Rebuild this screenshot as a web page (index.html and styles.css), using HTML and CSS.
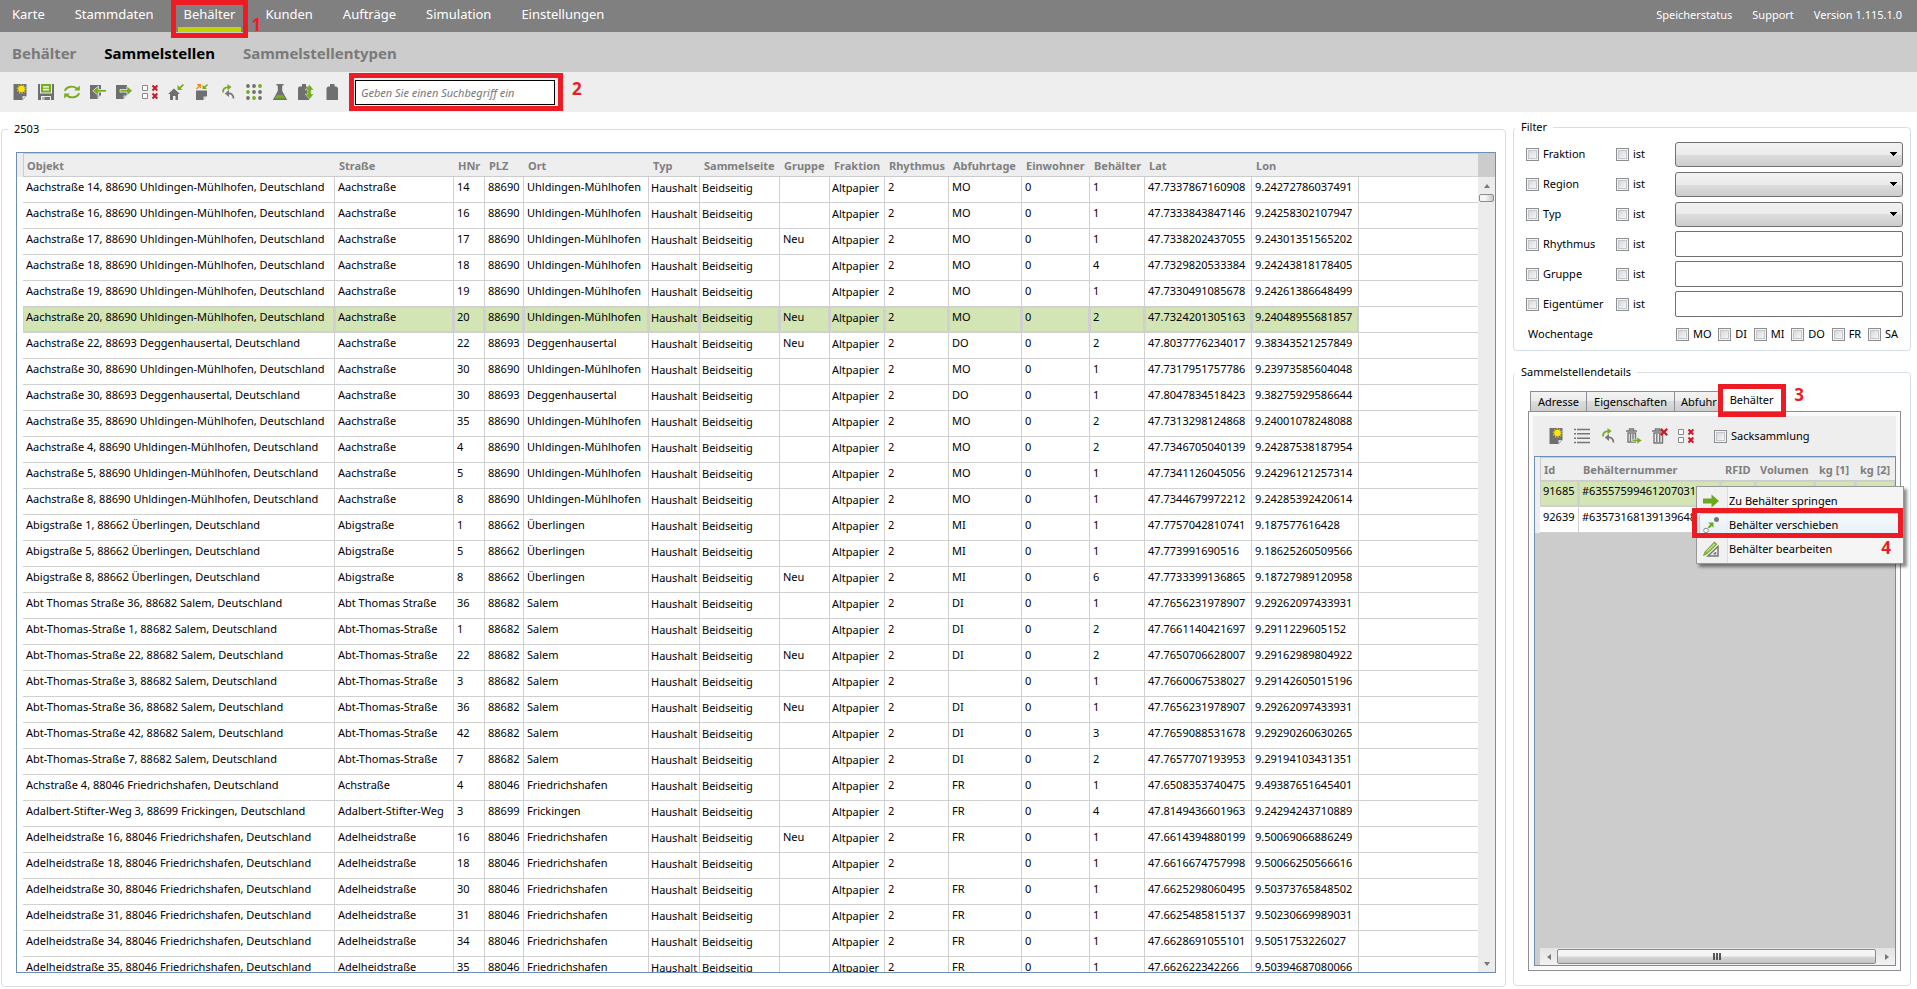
FILE: index.html
```html
<!DOCTYPE html>
<html lang="de">
<head>
<meta charset="utf-8">
<title>Sammelstellen</title>
<link rel="stylesheet" href="styles.css">
</head>
<body>
<svg class="sprite" aria-hidden="true">
  <symbol id="i-new" viewBox="0 0 16 16"><path fill="#6f6f6f" d="M1.500 0h13v12l-4 4h-9z"/><path fill="#e2e2e2" d="M10.500 15.500V12H14z"/><circle cx="9.500" cy="5" r="4.200" fill="none" stroke="#c9bd2a" stroke-width="1.400" stroke-dasharray="1.300 1.300"/><circle cx="9.500" cy="5" r="3.300" fill="#ffe600"/></symbol>
  <symbol id="i-save" viewBox="0 0 16 16"><path fill="#6f6f6f" d="M0 0h2v9.500h12V0h2v16h-3v-4H3v4H0z"/><path fill="#76ad1c" d="M3 0h10v8.500H3z"/><path fill="#e4eed2" d="M5 2h6v4.500H5z"/><path stroke="#76ad1c" d="M5 4.200h6"/><path fill="#b8b8b8" d="M4 13h2.500v3H4z"/><path fill="#777" d="M6.500 13H12v3H6.500z"/></symbol>
  <symbol id="i-refresh" viewBox="0 0 16 16"><g fill="none" stroke="#76ad1c" stroke-width="1.900"><path d="M.8 6.800A7.200 6 0 0 1 13.400 5"/><path d="M15.200 9.200A7.200 6 0 0 1 2.600 11"/></g><path fill="#76ad1c" d="M10.200 6.500h5.600V1.500zM5.800 9.500H.2v5z"/></symbol>
  <symbol id="i-in" viewBox="0 0 16 16"><path fill="#6f6f6f" d="M0 1h11v10l-3.500 4H0z"/><path fill="#d0d0d0" d="M7.500 15v-3.500H11z"/><path fill="#76ad1c" stroke="#eee" stroke-width=".8" d="M2.800 6.800 8.500 2v3.500h8v2.600h-8v3.500z"/></symbol>
  <symbol id="i-out" viewBox="0 0 16 16"><path fill="#6f6f6f" d="M0 1h11v10l-3.500 4H0z"/><path fill="#d0d0d0" d="M7.500 15v-3.500H11z"/><path fill="#76ad1c" stroke="#eee" stroke-width=".8" d="M16.500 6.800 11 2v3.500H4v2.600h7v3.500z"/></symbol>
  <symbol id="i-check" viewBox="0 0 16 16"><path fill="#fafafa" stroke="#8a8a8a" d="M.5 1.500h5v5h-5zM.5 9.500h5v5h-5z"/><path stroke="#cf1820" stroke-width="2" d="m10.500 1.500 4.800 5m0-5-4.800 5M10.500 9.500l4.800 5m0-5-4.800 5"/></symbol>
  <symbol id="i-home" viewBox="0 0 16 16"><path fill="#6f6f6f" d="M6 4.500 0 10h2v6h3v-4h2.500v4H10v-6h2z"/><path fill="#76ad1c" d="M9.500 1v5h5l-1.700-1.700L16 1.200 14.800 0l-3.200 3z"/></symbol>
  <symbol id="i-page" viewBox="0 0 16 16"><path fill="#6f6f6f" d="M2 6.500h11V12l-3.500 4H2z"/><path fill="#ddd" d="M9.500 16v-3.500H13z"/><path fill="#ef8a1d" d="M7 0v4.500L5.500 3 3 5.500 2 4.500 4.500 2 2.500 0z"/><path fill="#76ad1c" d="M8.500.5V5H13l-1.500-1.500L14 1l-1-1-2.800 2.500z"/></symbol>
  <symbol id="i-undo" viewBox="0 0 16 16"><g fill="none" stroke-width="1.800"><path stroke="#76ad1c" d="M3.200 8.500C2.500 5 5 3.200 8.500 3.200"/><path stroke="#777" d="M8 9.500c3.500-.3 5.500 1.500 5.500 5"/></g><path fill="#76ad1c" d="M7.500 0v6.500L11.500 3z"/><path fill="#777" d="M9 6v7L4.800 9.600z"/></symbol>
  <symbol id="i-dots" viewBox="0 0 16 16"><g fill="#6f6f6f"><circle cx="2" cy="2" r="1.900"/><circle cx="8" cy="2" r="1.900"/><circle cx="8" cy="8" r="1.900"/><circle cx="14" cy="8" r="1.900"/><circle cx="2" cy="14" r="1.900"/><circle cx="14" cy="14" r="1.900"/></g><g fill="#76ad1c"><circle cx="14" cy="2" r="1.900"/><circle cx="2" cy="8" r="1.900"/><circle cx="8" cy="14" r="1.900"/></g></symbol>
  <symbol id="i-flask" viewBox="0 0 16 16"><path fill="#6f6f6f" d="M4.500 0h7v1.500h-1.300V7l5 9H.8l5-9V1.500H4.500z"/><path fill="#76ad1c" d="M4.800 11h6.400l2 3.500H2.800z"/></symbol>
  <symbol id="i-sync" viewBox="0 0 16 16"><path fill="#6f6f6f" d="M4 0h4v2.500h3V16H0V4l1-1.500h3z"/><path fill="#76ad1c" stroke="#eee" stroke-width=".5" d="M11.500.5 15.800 6h-2.600v4h2.600l-4.300 5.500L7.200 10h2.600V6H7.200z"/></symbol>
  <symbol id="i-bin" viewBox="0 0 16 16"><path fill="#6f6f6f" d="M6 0h4.500v2.500h2L14 4v12H2.500V4L4 2.500h2z"/></symbol>
  <symbol id="i-list" viewBox="0 0 16 16"><path stroke="#777" stroke-width="1.400" d="M0 1.500h2M3 1.500h13M0 5.800h2M3 5.800h13M0 10.200h2M3 10.200h13M0 14.500h2M3 14.500h13"/></symbol>
  <symbol id="i-trashgo" viewBox="0 0 16 16"><path fill="none" stroke="#777" stroke-width="1.400" d="M0 3h11M3.500 2.500V1h4v1.500M2 5h7.500v9H2zM4.500 6v7M7 6v7"/><path fill="#76ad1c" stroke="#eee" stroke-width=".5" d="M6.500 11.300H11V9l5 3.500-5 3.500v-2.500H6.500z"/></symbol>
  <symbol id="i-trashx" viewBox="0 0 16 16"><path fill="none" stroke="#777" stroke-width="1.400" d="M0 3h11M3.500 2.500V1h4v1.500M2 5h8.500v10H2zM4.800 6v8M7.700 6v8"/><path stroke="#cf1820" stroke-width="2.200" d="m8.800.8 6.400 6.400m0-6.400L8.800 7.200"/></symbol>
  <symbol id="i-arrow" viewBox="0 0 16 16"><path fill="#6aa81c" d="M0 5.500h8.500V1.500L16 8l-7.500 6.500v-4H0z"/></symbol>
  <symbol id="i-move" viewBox="0 0 16 16"><circle cx="13.500" cy="2.500" r="2.500" fill="#777"/><circle cx="3" cy="13.500" r="2.300" fill="#fff" stroke="#888"/><path fill="#6aa81c" d="M10.500 5.500v5.300L8.800 9 6 11.500 4.800 10.200 7.200 7.600 5.300 5.500z"/></symbol>
  <symbol id="i-edit" viewBox="0 0 16 16"><path fill="none" stroke="#777" stroke-width="1.500" d="M15 5.500V15H5zM12.500 11v1.700h-2"/><path fill="#8cba43" stroke="#6a9a24" stroke-width=".7" d="m11.500.8 2.500 2.500L4 13l-3.500 1.500L1.800 11z"/><path fill="none" stroke="#fff" stroke-width=".8" d="M11.500 3 4 10.500"/></symbol>
</svg>

<header class="topbar">
  <nav class="mainnav" aria-label="Hauptmenü">
    <a href="#">Karte</a>
    <a href="#">Stammdaten</a>
    <a href="#" class="current">Behälter<span class="mark mark-nav"></span><b class="num num-1">1</b></a>
    <a href="#">Kunden</a>
    <a href="#">Aufträge</a>
    <a href="#">Simulation</a>
    <a href="#">Einstellungen</a>
  </nav>
  <nav class="metanav" aria-label="Service">
    <a href="#">Speicherstatus</a>
    <a href="#">Support</a>
    <span>Version 1.115.1.0</span>
  </nav>
</header>

<nav class="subnav" aria-label="Untermenü">
  <a href="#">Behälter</a>
  <a href="#" class="current">Sammelstellen</a>
  <a href="#">Sammelstellentypen</a>
</nav>

<div class="toolbar">
  <button aria-label="Neu"><svg><use href="#i-new"/></svg></button>
  <button aria-label="Speichern"><svg><use href="#i-save"/></svg></button>
  <button aria-label="Aktualisieren"><svg><use href="#i-refresh"/></svg></button>
  <button aria-label="Importieren"><svg><use href="#i-in"/></svg></button>
  <button aria-label="Exportieren"><svg><use href="#i-out"/></svg></button>
  <button aria-label="Auswahl aufheben"><svg><use href="#i-check"/></svg></button>
  <button aria-label="Standort"><svg><use href="#i-home"/></svg></button>
  <button aria-label="Zuordnen"><svg><use href="#i-page"/></svg></button>
  <button aria-label="Rückgängig"><svg><use href="#i-undo"/></svg></button>
  <button aria-label="Raster"><svg><use href="#i-dots"/></svg></button>
  <button aria-label="Test"><svg><use href="#i-flask"/></svg></button>
  <button aria-label="Abgleich"><svg><use href="#i-sync"/></svg></button>
  <button aria-label="Behälter"><svg><use href="#i-bin"/></svg></button>
  <div class="search">
    <input type="text" aria-label="Suche" placeholder="Geben Sie einen Suchbegriff ein">
    <span class="mark mark-search"></span><b class="num num-2">2</b>
  </div>
</div>

<main class="content">
  <fieldset class="group group-list">
    <legend>2503</legend>
    <div class="grid">
      <div class="grid-view">
        <table class="data places">
          <colgroup>
            <col class="w-mark"><col class="w-objekt"><col class="w-strasse"><col class="w-hnr"><col class="w-plz"><col class="w-ort"><col class="w-typ"><col class="w-seite"><col class="w-gruppe"><col class="w-fraktion"><col class="w-rhythmus"><col class="w-tage"><col class="w-einw"><col class="w-beh"><col class="w-geo"><col class="w-geo"><col>
          </colgroup>
          <thead><tr><td class="mark-col"></td><th>Objekt</th><th>Straße</th><th>HNr</th><th>PLZ</th><th>Ort</th><th>Typ</th><th>Sammelseite</th><th>Gruppe</th><th>Fraktion</th><th>Rhythmus</th><th>Abfuhrtage</th><th>Einwohner</th><th>Behälter</th><th>Lat</th><th>Lon</th><td class="fill"></td></tr></thead>
          <tbody id="places"></tbody>
        </table>
      </div>
      <div class="vscroll">
        <span class="corner"></span>
        <button class="sb-up" aria-label="Nach oben"></button>
        <span class="v-thumb"></span>
        <button class="sb-down" aria-label="Nach unten"></button>
      </div>
    </div>
  </fieldset>

  <aside class="side">
    <fieldset class="group group-filter">
      <legend>Filter</legend>
      <div class="filter-row"><label><input type="checkbox">Fraktion</label><label><input type="checkbox">ist</label><select aria-label="Fraktion Wert"><option></option></select></div>
      <div class="filter-row"><label><input type="checkbox">Region</label><label><input type="checkbox">ist</label><select aria-label="Region Wert"><option></option></select></div>
      <div class="filter-row"><label><input type="checkbox">Typ</label><label><input type="checkbox">ist</label><select aria-label="Typ Wert"><option></option></select></div>
      <div class="filter-row"><label><input type="checkbox">Rhythmus</label><label><input type="checkbox">ist</label><input type="text" aria-label="Rhythmus Wert"></div>
      <div class="filter-row"><label><input type="checkbox">Gruppe</label><label><input type="checkbox">ist</label><input type="text" aria-label="Gruppe Wert"></div>
      <div class="filter-row"><label><input type="checkbox">Eigentümer</label><label><input type="checkbox">ist</label><input type="text" aria-label="Eigentümer Wert"></div>
      <div class="filter-row"><span class="days-title">Wochentage</span>
        <div class="days"><label><input type="checkbox">MO</label><label><input type="checkbox">DI</label><label><input type="checkbox">MI</label><label><input type="checkbox">DO</label><label><input type="checkbox">FR</label><label><input type="checkbox">SA</label></div>
      </div>
    </fieldset>

    <fieldset class="group group-details">
      <legend>Sammelstellendetails</legend>
      <div class="tabs" role="tablist">
        <button role="tab">Adresse</button><button role="tab">Eigenschaften</button><button role="tab" class="clipped">Abfuhr</button><button role="tab" class="active" aria-selected="true">Behälter<span class="mark mark-tab"></span><b class="num num-3">3</b></button>
      </div>
      <div class="pane">
        <div class="toolbar small">
          <button aria-label="Neu"><svg><use href="#i-new"/></svg></button>
          <button aria-label="Liste"><svg><use href="#i-list"/></svg></button>
          <button aria-label="Rückgängig"><svg><use href="#i-undo"/></svg></button>
          <button aria-label="Verschieben"><svg><use href="#i-trashgo"/></svg></button>
          <button aria-label="Löschen"><svg><use href="#i-trashx"/></svg></button>
          <button aria-label="Auswahl aufheben"><svg><use href="#i-check"/></svg></button>
          <label><input type="checkbox">Sacksammlung</label>
        </div>
        <div class="grid bins-grid">
          <div class="bins-view">
            <table class="data bins">
              <colgroup><col class="w-mark"><col class="w-id"><col class="w-nummer"><col class="w-rfid"><col class="w-vol"><col class="w-kg"><col></colgroup>
              <thead><tr><td class="mark-col"></td><th>Id</th><th>Behälternummer</th><th>RFID</th><th>Volumen</th><th>kg [1]</th><th>kg [2]</th></tr></thead>
              <tbody>
                <tr class="selected"><td class="mark-col"></td><td>91685</td><td>#635575994612070312</td><td></td><td></td><td></td><td></td></tr>
                <tr><td class="mark-col"></td><td>92639</td><td>#635731681391396484</td><td></td><td></td><td></td><td></td></tr>
              </tbody>
            </table>
          </div>
          <div class="hscroll">
            <button class="sb-left" aria-label="Nach links"></button>
            <span class="h-thumb"><i></i><i></i><i></i></span>
            <button class="sb-right" aria-label="Nach rechts"></button>
          </div>
          <div class="menu" role="menu">
            <button role="menuitem"><svg><use href="#i-arrow"/></svg><span>Zu Behälter springen</span></button>
            <button role="menuitem" class="hover"><svg><use href="#i-move"/></svg><span>Behälter verschieben</span></button>
            <button role="menuitem"><svg><use href="#i-edit"/></svg><span>Behälter bearbeiten</span></button>
            <span class="mark mark-menu"></span><b class="num num-4">4</b>
          </div>
        </div>
      </div>
    </fieldset>
  </aside>
</main>
<script src="script.js"></script>
</body>
</html>
```
FILE: styles.css
```css
* { box-sizing: border-box; }

body {
  margin: 0;
  height: 100vh;
  display: flex;
  flex-direction: column;
  overflow: hidden;
  background: #fff;
  color: #000;
  font: 11px/16px "Noto Sans", "Open Sans", sans-serif;
}

a { color: inherit; text-decoration: none; }
button { margin: 0; padding: 0; border: 0; background: none; font: inherit; color: inherit; }
.sprite { display: none; }

/* header bars */
.topbar {
  flex: none;
  height: 32px;
  display: flex;
  justify-content: space-between;
  background: #808080;
  color: #fff;
}
.mainnav { display: flex; gap: 18px; padding-left: 6px; font-size: 13px; line-height: 28px; }
.mainnav a { position: relative; padding: 0 6px; }
.mainnav .current { border-bottom: 5px solid #c3d300; }
.metanav { display: flex; gap: 20px; padding-right: 15px; line-height: 30px; }

.subnav {
  flex: none;
  display: flex;
  align-items: center;
  gap: 28px;
  height: 40px;
  padding: 2px 0 0 12px;
  background: #ccc;
  color: #7a7a7a;
  font-size: 15px;
  font-weight: 700;
  line-height: 20px;
}
.subnav .current { color: #000; }

.toolbar {
  flex: none;
  display: flex;
  align-items: center;
  height: 40px;
  padding-left: 7px;
  background: #eee;
}
.toolbar button { width: 26px; height: 24px; display: flex; align-items: center; justify-content: center; }
.toolbar svg { width: 16px; height: 16px; }

.search { position: relative; margin-left: 10px; display: flex; }
.search input {
  width: 200px;
  height: 25px;
  padding: 0 5px;
  border: 1px solid #000;
  background: #fff;
  font: italic 11px/16px "Noto Sans", sans-serif;
}
.search input::placeholder { color: #777; opacity: 1; }

/* red callouts */
.mark { position: absolute; border: 5px solid #ed1c24; pointer-events: none; z-index: 2; }
.num { position: absolute; z-index: 2; color: #ed1c24; font-size: 17px; font-weight: 700; line-height: 20px; }
.mark-nav { top: 0; left: -7px; right: -7px; height: 38px; }
.num-1 { left: 74px; top: 15px; }
.mark-search { inset: -7px -8px -6px -6px; }
.num-2 { left: 217px; top: -1px; }
.mark-tab { inset: -5px -3px -6px -2px; }
.num-3 { right: -21px; top: -4px; }
.mark-menu { left: -5px; right: 0; top: 21px; height: 30px; }
.num-4 { right: 12px; top: 51px; }

/* layout */
.content { flex: 1; min-height: 0; display: flex; gap: 7px; padding: 0 6px 2px 1px; }
.group {
  display: flex;
  flex-direction: column;
  min-width: 0;
  min-height: 0;
  margin: 0;
  border: 1px solid #d5dfe5;
  border-radius: 4px;
}
.group legend { padding: 0 6px; }
.group-list { flex: 1; margin-top: 9px; padding: 15px 9px 13px 14px; }
.group-list legend { margin-left: -8px; }
.side { flex: none; width: 398px; display: flex; flex-direction: column; padding-top: 7px; }
.group-filter { flex: none; padding: 4px 7px 0 12px; height: 232px; }
.group-filter legend { margin-left: -11px; }
.group-details { flex: 1; margin: 13px 0 1px; padding: 9px 9px 14px 14px; }
.group-details legend { margin-left: -13px; }

/* grids */
.grid { position: relative; flex: 1; min-height: 0; display: flex; border: 1px solid #6d8fb3; }
.grid-view { flex: 1; min-width: 0; overflow: hidden; background: #fff; }
.data { width: 100%; table-layout: fixed; border-collapse: separate; border-spacing: 0; }
.data thead tr { height: 24px; background: #eee; }
.data th {
  padding: 2px 0 0 4px;
  border-top: 1px solid #ccc;
  border-bottom: 1px solid #ccc;
  color: #808080;
  font-weight: 700;
  line-height: 16px;
  text-align: left;
  white-space: nowrap;
}
.data th:nth-child(2) { padding-left: 3px; border-left: 1px solid #ccc; }
.data thead .fill { border-top: 1px solid #ccc; }
.data tbody tr { height: 26px; background: #fff; }
.data td {
  padding: 2px 0 0 3px;
  border-right: 1px solid #d0d0d0;
  border-bottom: 1px solid #d0d0d0;
  vertical-align: top;
  white-space: nowrap;
  overflow: hidden;
}
.data td.low { padding-top: 3px; padding-left: 2px; }
.data td.fill { border-right: 0; }
.data td.mark-col, .data thead .mark-col { border: 0; padding: 0; }
.data .selected td:not(.fill):not(.mark-col) { background: #d3e4b5; box-shadow: inset 0 0 0 1px #d0d0d0; }

.w-mark { width: 6px; }
.w-objekt { width: 312px; }
.w-strasse { width: 119px; }
.w-hnr { width: 31px; }
.w-plz { width: 39px; }
.w-ort { width: 125px; }
.w-typ { width: 51px; }
.w-seite { width: 80px; }
.w-gruppe { width: 50px; }
.w-fraktion { width: 55px; }
.w-rhythmus { width: 64px; }
.w-tage { width: 73px; }
.w-einw { width: 68px; }
.w-beh { width: 55px; }
.w-geo { width: 107px; }

.bins .w-mark { width: 5px; }
.w-id { width: 39px; }
.w-nummer { width: 142px; }
.w-rfid { width: 35px; }
.w-vol { width: 59px; }
.w-kg { width: 41px; }

/* scrollbars */
.vscroll { flex: none; width: 17px; display: flex; flex-direction: column; background: #ececec; }
.corner { height: 24px; background: #ccc; }
.v-thumb { height: 8px; margin: 0 1px; border: 1px solid #8c8c8c; border-radius: 2px; background: linear-gradient(90deg, #f5f5f5 40%, #c6c6c6); }
.sb-up, .sb-down { height: 17px; display: flex; align-items: center; justify-content: center; }
.sb-down { margin-top: auto; }
.sb-up::before, .sb-down::before, .sb-left::before, .sb-right::before { content: ""; border: 3px solid transparent; }
.sb-up::before { border-top: 0; border-bottom: 4px solid #777; }
.sb-down::before { border-bottom: 0; border-top: 4px solid #777; }
.sb-left::before { border-left: 0; border-right: 4px solid #777; }
.sb-right::before { border-right: 0; border-left: 4px solid #777; }
.hscroll { flex: none; height: 17px; margin-left: 5px; display: flex; background: linear-gradient(#e3e3e3, #f2f2f2); }
.sb-left, .sb-right { width: 17px; display: flex; align-items: center; justify-content: center; }
.h-thumb {
  flex: 1;
  margin: 1px 2px 1px 0;
  display: flex;
  align-items: center;
  justify-content: center;
  gap: 1px;
  border: 1px solid #8c8c8c;
  border-radius: 2px;
  background: linear-gradient(#f5f5f5 45%, #d6d6d6 55%, #c3c3c3);
}
.h-thumb i { width: 2px; height: 7px; background: #555; }

/* form controls */
input[type="checkbox"] {
  appearance: none;
  flex: none;
  width: 13px;
  height: 13px;
  margin: 0;
  border: 1px solid #8e8f8f;
  background: linear-gradient(135deg, #cbcfd5, #f6f6f6 80%);
  box-shadow: inset 0 0 0 1px #f4f4f4, inset 0 0 0 2px #c4c8cc;
}
label { display: flex; align-items: center; gap: 4px; }
.filter-row { display: grid; grid-template-columns: 90px 59px 1fr; height: 30px; align-items: center; }
.filter-row select, .filter-row input[type="text"] {
  width: 100%;
  height: 26px;
  border: 1px solid #707070;
  border-radius: 2px;
  background: #fff;
  font: inherit;
}
.filter-row select {
  appearance: none;
  height: 25px;
  border-radius: 3px;
  background:
    conic-gradient(from -45deg at 50% 100%, #000 90deg, transparent 0) right 5px center / 7px 4px no-repeat,
    linear-gradient(#f2f2f2, #ebebeb 50%, #ddd 50%, #cdcdcd);
}
.days-title { padding-left: 2px; }
.days { grid-column: 3; display: flex; justify-content: space-between; padding: 0 5px 0 1px; }

/* details */
.tabs { display: flex; align-items: flex-end; padding-left: 2px; height: 22px; }
.tabs button {
  position: relative;
  flex: none;
  height: 20px;
  padding: 0 7px;
  border: 1px solid #8c8e94;
  border-bottom: 0;
  border-right: 0;
  background: linear-gradient(#f3f3f3, #ebebeb 50%, #ddd 50%, #cdcdcd);
}
.tabs .clipped { width: 45px; padding: 0 0 0 6px; text-align: left; }
.tabs .active { height: 23px; width: 65px; border: 1px solid #8c8e94; border-bottom: 0; background: #fff; }
.pane {
  flex: 1;
  min-height: 0;
  display: flex;
  flex-direction: column;
  padding: 4px;
  border: 1px solid #8c8e94;
  background: #fafafa;
}
.toolbar.small { padding-left: 10px; }
.toolbar.small label { margin-left: 15px; }
.bins-grid { flex-direction: column; margin-left: 1px; background: #ccc; }
.bins-view { flex: 1; min-height: 0; overflow: hidden; }
.bins-view .mark-col { background: #eee; }

.menu {
  position: absolute;
  z-index: 3;
  left: 161px;
  top: 29px;
  width: 208px;
  padding: 2px;
  border: 1px solid #979797;
  background: linear-gradient(90deg, #f1f1f1 30px, #dedede 30px, #dedede 31px, #f5f5f5 31px);
  box-shadow: 3px 3px 3px rgba(0, 0, 0, .45);
}
.menu button { width: 100%; height: 24px; display: flex; align-items: center; gap: 10px; padding-left: 4px; }
.menu svg { width: 16px; height: 16px; }
.menu .hover { border: 1px solid #aecff7; border-radius: 3px; padding-left: 3px; background: linear-gradient(rgba(245, 250, 253, .8), rgba(225, 239, 248, .8)); }
```
FILE: script.js
```js
// straße | hnr | plz | ort | gruppe | abfuhrtag | behälter | lat | lon
const rows = `
Aachstraße|14|88690|Uhldingen-Mühlhofen||MO|1|47.7337867160908|9.24272786037491
Aachstraße|16|88690|Uhldingen-Mühlhofen||MO|1|47.7333843847146|9.24258302107947
Aachstraße|17|88690|Uhldingen-Mühlhofen|Neu|MO|1|47.7338202437055|9.24301351565202
Aachstraße|18|88690|Uhldingen-Mühlhofen||MO|4|47.7329820533384|9.24243818178405
Aachstraße|19|88690|Uhldingen-Mühlhofen||MO|1|47.7330491085678|9.24261386648499
Aachstraße|20|88690|Uhldingen-Mühlhofen|Neu|MO|2|47.7324201305163|9.24048955681857
Aachstraße|22|88693|Deggenhausertal|Neu|DO|2|47.8037776234017|9.38343521257849
Aachstraße|30|88690|Uhldingen-Mühlhofen||MO|1|47.7317951757786|9.23973585604048
Aachstraße|30|88693|Deggenhausertal||DO|1|47.8047834518423|9.38275929586644
Aachstraße|35|88690|Uhldingen-Mühlhofen||MO|2|47.7313298124868|9.24001078248088
Aachstraße|4|88690|Uhldingen-Mühlhofen||MO|2|47.7346705040139|9.24287538187954
Aachstraße|5|88690|Uhldingen-Mühlhofen||MO|1|47.7341126045056|9.24296121257314
Aachstraße|8|88690|Uhldingen-Mühlhofen||MO|1|47.7344679972212|9.24285392420614
Abigstraße|1|88662|Überlingen||MI|1|47.7757042810741|9.187577616428
Abigstraße|5|88662|Überlingen||MI|1|47.773991690516|9.18625260509566
Abigstraße|8|88662|Überlingen|Neu|MI|6|47.7733399136865|9.18727989120958
Abt Thomas Straße|36|88682|Salem||DI|1|47.7656231978907|9.29262097433931
Abt-Thomas-Straße|1|88682|Salem||DI|2|47.7661140421697|9.2911229605152
Abt-Thomas-Straße|22|88682|Salem|Neu|DI|2|47.7650706628007|9.29162989804922
Abt-Thomas-Straße|3|88682|Salem|||1|47.7660067538027|9.29142605015196
Abt-Thomas-Straße|36|88682|Salem|Neu|DI|1|47.7656231978907|9.29262097433931
Abt-Thomas-Straße|42|88682|Salem||DI|3|47.7659088531678|9.29290260630265
Abt-Thomas-Straße|7|88682|Salem||DI|2|47.7657707193953|9.29194103431351
Achstraße|4|88046|Friedrichshafen||FR|1|47.6508353740475|9.49387651645401
Adalbert-Stifter-Weg|3|88699|Frickingen||FR|4|47.8149436601963|9.24294243710889
Adelheidstraße|16|88046|Friedrichshafen|Neu|FR|1|47.6614394880199|9.50069066886249
Adelheidstraße|18|88046|Friedrichshafen|||1|47.6616674757998|9.50066250566616
Adelheidstraße|30|88046|Friedrichshafen||FR|1|47.6625298060495|9.50373765848502
Adelheidstraße|31|88046|Friedrichshafen||FR|1|47.6625485815137|9.50230669989031
Adelheidstraße|34|88046|Friedrichshafen||FR|1|47.6628691055101|9.5051753226027
Adelheidstraße|35|88046|Friedrichshafen||FR|1|47.662622342266|9.50394687080066
`.trim().split("\n").map(line => line.split("|"));

const selectedIndex = 5;
const body = document.getElementById("places");

function addCell(tr, text, className) {
  const td = document.createElement("td");
  td.textContent = text;
  if (className) td.className = className;
  tr.append(td);
}

rows.forEach(([street, no, zip, city, group, day, bins, lat, lon], index) => {
  const tr = document.createElement("tr");
  if (index === selectedIndex) tr.className = "selected";
  addCell(tr, "", "mark-col");
  addCell(tr, `${street} ${no}, ${zip} ${city}, Deutschland`);
  [street, no, zip, city].forEach(text => addCell(tr, text));
  addCell(tr, "Haushalt", "low");
  addCell(tr, "Beidseitig", "low");
  addCell(tr, group);
  addCell(tr, "Altpapier", "low");
  ["2", day, "0", bins, lat, lon].forEach(text => addCell(tr, text));
  addCell(tr, "", "fill");
  body.append(tr);
});
```
